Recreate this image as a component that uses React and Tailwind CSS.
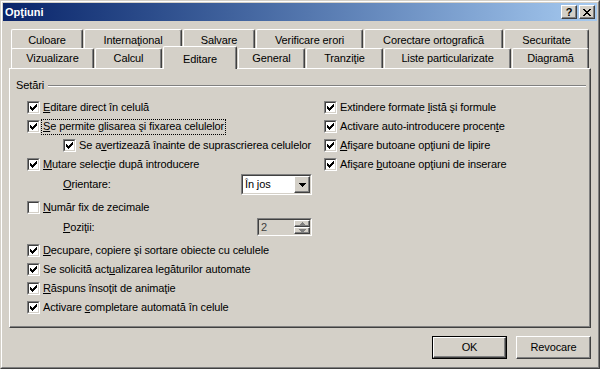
import React from "react";

const backTabs = [
  { label: "Culoare", w: "w-[72px]" },
  { label: <>Internaţional</>, w: "w-[98px]" },
  { label: "Salvare", w: "w-[72px]" },
  { label: "Verificare erori", w: "w-[107px]" },
  { label: "Corectare ortografică", w: "w-[139px]" },
  { label: "Securitate", w: "w-[85px]" },
];

const frontTabs = [
  { label: "Vizualizare", w: "w-[83px]" },
  { label: "Calcul", w: "w-[67px]" },
  { label: "Editare", w: "w-[74px]", selected: true },
  { label: "General", w: "w-[67px]" },
  { label: "Tranziţie", w: "w-[77px]" },
  { label: "Liste particularizate", w: "w-[127px]" },
  { label: "Diagramă", w: "w-[77px]" },
];

const U = ({ children }) => <span className="underline underline-offset-[1px]">{children}</span>;

const raised =
  "border border-t-white border-l-white border-b-[#404040] border-r-[#404040] shadow-[inset_-1px_-1px_0_#808080] bg-[#d4d0c8]";

const Check = ({ checked }) => (
  <span className="block w-[13px] h-[13px] shrink-0 border border-t-[#808080] border-l-[#808080] border-b-white border-r-white">
    <span className="block w-full h-full bg-white border border-t-[#404040] border-l-[#404040] border-b-[#d4d0c8] border-r-[#d4d0c8]">
      {checked && (
        <svg width="9" height="9" viewBox="0 0 9 9" className="block" shapeRendering="crispEdges">
          <path d="M1 3h1v1h1v1h1v-1h1v-1h1v-1h1v-1h1v3h-1v1h-1v1h-1v1h-1v1h-1v-1h-1v-1h-1z" fill="#000" />
        </svg>
      )}
    </span>
  </span>
);

const Row = ({ checked = true, indent, focus, tall, children }) => (
  <div className={`${tall ? "h-[20px]" : "h-[19px]"} flex items-center ${indent ? "pl-[36px]" : ""}`}>
    <Check checked={checked} />
    <span
      className={`whitespace-nowrap leading-[13px] ${
        focus ? "ml-[1px] border border-dotted border-black px-[1px] pb-px" : "ml-[3px]"
      }`}
    >
      {children}
    </span>
  </div>
);

const Arrow = ({ up, color = "#000" }) => (
  <svg width="7" height="4" viewBox="0 0 7 4" shapeRendering="crispEdges">
    <path d={up ? "M3 0h1v1h1v1h1v1h1v1h-7v-1h1v-1h1v-1h1z" : "M0 0h7v1h-1v1h-1v1h-1v1h-1v-1h-1v-1h-1v-1h-1z"} fill={color} />
  </svg>
);

export default function App() {
  return (
    <div className="w-[600px] h-[369px] bg-[#d4d0c8] border border-t-[#d4d0c8] border-l-[#d4d0c8] border-b-[#404040] border-r-[#404040] font-['Liberation_Sans',Arial,sans-serif] text-[11px] tracking-[-0.12px] text-black">
      <div className="h-full border border-t-white border-l-white border-b-[#808080] border-r-[#808080] p-px flex flex-col">
        {/* title bar */}
        <div className="h-[18px] shrink-0 bg-linear-to-r from-[#0a246a] to-[#a6caf0] flex items-center pl-[2px] pr-[2px]">
          <span className="text-white font-bold text-[11px] leading-[13px] tracking-normal">Opţiuni</span>
          <div className="ml-auto flex gap-[2px]">
            <div className={`w-[16px] h-[14px] flex items-center justify-center ${raised}`}>
              <span className="font-bold text-[11px] leading-[11px] pt-px">?</span>
            </div>
            <div className={`w-[16px] h-[14px] flex items-center justify-center ${raised}`}>
              <svg width="8" height="7" viewBox="0 0 8 7" shapeRendering="crispEdges">
                <path d="M0 0h2v1h1v1h2v-1h1v-1h2v1h-1v1h-1v1h-1v1h1v1h1v1h1v1h-2v-1h-1v-1h-2v1h-1v1h-2v-1h1v-1h1v-1h1v-1h-1v-1h-1v-1h-1z" fill="#000" />
              </svg>
            </div>
          </div>
        </div>

        {/* tabs */}
        <div className="mt-[8px] pl-[8px] flex flex-col">
          <div className="h-[19px] flex gap-px">
            {backTabs.map((t, i) => (
              <div
                key={i}
                className={`${t.w} h-[20px] shrink-0 border-l border-t border-r border-l-white border-t-white border-r-[#404040] rounded-t-[2px] shadow-[inset_-1px_0_0_#808080] flex items-center justify-center pt-[2px] whitespace-nowrap`}
              >
                {t.label}
              </div>
            ))}
          </div>
          <div className="h-[20px] flex gap-px items-start">
            {frontTabs.map((t, i) =>
              t.selected ? (
                <div
                  key={i}
                  className={`${t.w} h-[23px] -mt-[2px] shrink-0 relative z-10 bg-[#d4d0c8] border-l border-t border-r border-l-white border-t-white border-r-[#404040] rounded-t-[2px] shadow-[inset_-1px_0_0_#808080] flex justify-center pt-[4px] whitespace-nowrap`}
                >
                  {t.label}
                </div>
              ) : (
                <div
                  key={i}
                  className={`${t.w} h-[20px] shrink-0 relative bg-[#d4d0c8] border-l border-t border-r border-l-white border-t-white border-r-[#404040] rounded-t-[2px] shadow-[inset_-1px_0_0_#808080] flex items-center justify-center whitespace-nowrap`}
                >
                  {t.label}
                </div>
              )
            )}
          </div>
        </div>

        {/* panel */}
        <div className="ml-[6px] w-[582px] h-[260px] shrink-0 border border-t-white border-l-white border-b-[#404040] border-r-[#404040] shadow-[inset_-1px_-1px_0_#808080] pt-[10px] pl-[6px] pr-[4px]">
          <div className="h-[13px] flex items-center">
            <span className="leading-[13px]">Setări</span>
            <div className="flex-1 ml-[4px] h-[2px] border-t border-t-[#808080] border-b border-b-white"></div>
          </div>

          <div className="mt-[6px] pl-[11px] flex">
            <div className="w-[297px] shrink-0 flex flex-col">
              <Row>
                <U>E</U>ditare direct în celulă
              </Row>
              <Row focus>
                <U>S</U>e permite glisarea şi fixarea celulelor
              </Row>
              <Row indent>
                Se a<U>v</U>ertizează înainte de suprascrierea celulelor
              </Row>
              <Row>
                <U>M</U>utare selecţie după introducere
              </Row>
              <div className="h-[21px] flex items-center">
                <span className="w-[178px] ml-[36px] shrink-0">
                  <U>O</U>rientare:
                </span>
                <div className="w-[71px] h-[21px] flex border border-t-[#808080] border-l-[#808080] border-b-white border-r-white">
                  <div className="flex-1 flex border border-t-[#404040] border-l-[#404040] border-b-[#d4d0c8] border-r-[#d4d0c8] bg-white">
                    <span className="flex-1 pl-[2px] leading-[17px]">În jos</span>
                    <div className={`w-[16px] h-[17px] flex items-center justify-center ${raised}`}>
                      <Arrow />
                    </div>
                  </div>
                </div>
              </div>
              <div className="mt-[3px]">
                <Row checked={false}>
                  <U>N</U>umăr fix de zecimale
                </Row>
              </div>
              <div className="h-[20px] flex items-center">
                <span className="w-[194px] ml-[36px] shrink-0">
                  <U>P</U>oziţii:
                </span>
                <div className="w-[55px] h-[18px] flex border border-t-[#808080] border-l-[#808080] border-b-white border-r-white">
                  <div className="flex-1 flex border border-t-[#404040] border-l-[#404040] border-b-[#d4d0c8] border-r-[#d4d0c8] bg-[#d4d0c8]">
                    <span className="flex-1 pl-[2px] leading-[14px] text-[#404040]">2</span>
                    <div className="w-[16px] flex flex-col">
                      <div className={`flex-1 flex items-center justify-center ${raised}`}>
                        <Arrow up color="#808080" />
                      </div>
                      <div className={`flex-1 flex items-center justify-center ${raised}`}>
                        <Arrow color="#808080" />
                      </div>
                    </div>
                  </div>
                </div>
              </div>
              <div className="mt-[3px]">
                <Row tall>
                  <U>D</U>ecupare, copiere şi sortare obiecte cu celulele
                </Row>
              </div>
              <Row>
                Se solicită act<U>u</U>alizarea legăturilor automate
              </Row>
              <Row>
                <U>R</U>ăspuns însoţit de animaţie
              </Row>
              <Row>
                Activare <U>c</U>ompletare automată în celule
              </Row>
            </div>

            <div className="flex flex-col">
              <Row>
                Extindere formate <U>l</U>istă şi formule
              </Row>
              <Row>
                Activare auto-introducere procen<U>t</U>e
              </Row>
              <Row>
                <U>A</U>fişare butoane opţiuni de lipire
              </Row>
              <Row>
                Afişare <U>b</U>utoane opţiuni de inserare
              </Row>
            </div>
          </div>
        </div>

        {/* buttons */}
        <div className="mt-[8px] pr-[6px] flex justify-end gap-[9px]">
          <div className="w-[75px] h-[23px] border border-black">
            <div className={`w-full h-full flex items-center justify-center ${raised}`}>OK</div>
          </div>
          <div className={`w-[75px] h-[23px] flex items-center justify-center ${raised}`}>Revocare</div>
        </div>
      </div>
    </div>
  );
}
